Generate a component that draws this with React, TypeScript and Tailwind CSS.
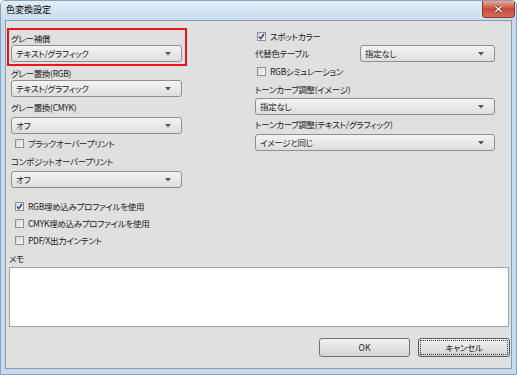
const font = { fontFamily: '"Noto Sans CJK JP", "Noto Sans", sans-serif' };

const Dropdown = ({ value, className = '' }: { value: string; className?: string }) => (
  <div
    className={`h-[17px] flex items-center justify-between pl-[4px] pr-[10px] border border-[#8e8f8f] rounded-[3px] bg-gradient-to-b from-[#f4f4f4] to-[#dedede] text-[8.5px] tracking-[-0.3px] text-[#1a1a1a] ${className}`}
  >
    <span className="leading-none">{value}</span>
    <svg width="6" height="4" viewBox="0 0 6 4">
      <path d="M0 0H6L3 3.5Z" fill="#555" />
    </svg>
  </div>
);

const Check = ({ checked = false, label }: { checked?: boolean; label: string }) => (
  <div className="flex items-center gap-[4px] text-[8.5px] tracking-[-0.3px] text-[#1a1a1a]">
    <div className="w-[9px] h-[9px] border border-[#8f8f8f] bg-gradient-to-br from-[#d8d8d8] to-[#f7f7f7] flex items-center justify-center">
      {checked && (
        <svg width="7" height="7" viewBox="0 0 7 7">
          <path d="M1 3.6L2.8 5.6L6 1" stroke="#1d3f8f" strokeWidth="1.4" fill="none" />
        </svg>
      )}
    </div>
    <span className="leading-none">{label}</span>
  </div>
);

const Label = ({ text, className = '' }: { text: string; className?: string }) => (
  <div className={`flex items-center text-[8.5px] tracking-[-0.3px] text-[#1a1a1a] leading-none ${className}`}>{text}</div>
);

export default function App() {
  return (
    <div
      className="w-[517px] h-[375px] flex flex-col bg-[#c5d9ef] border border-[#8aa1bb] rounded-t-[5px] overflow-hidden [font-feature-settings:'palt']"
      style={font}
    >
      {/* タイトルバー */}
      <div className="h-[18px] flex items-start justify-between bg-gradient-to-b from-[#e3edf8] to-[#c9dcf0]">
        <div className="pl-[5px] pt-[4px] text-[9px] text-black leading-none">色変換設定</div>
        <div className="mr-[1px] w-[33px] h-[17px] rounded-b-[4px] border border-t-0 border-[#8a3a33] bg-gradient-to-b from-[#e8a898] via-[#c9493c] to-[#d46a5c] flex items-center justify-center">
          <svg width="9" height="8" viewBox="0 0 9 8">
            <path d="M1 1L8 7M8 1L1 7" stroke="#5a1e18" strokeWidth="2.6" />
            <path d="M1 1L8 7M8 1L1 7" stroke="#fff" strokeWidth="1.6" />
          </svg>
        </div>
      </div>

      {/* クライアント領域 */}
      <div className="flex-1 mx-[4px] mb-[5px] mt-[1px] border border-[#8f9aa6] bg-[#e0e0e0] flex flex-col">
        <div className="flex pt-[7px] pl-[1px]">
          {/* 左列 */}
          <div className="w-[180px] flex flex-col">
            <div className="border-2 border-[#e8141b] pl-[2px] pr-[3px] pt-[1px] pb-[2px]">
              <Label text="グレー補償" className="h-[14px]" />
              <Dropdown value="テキスト/グラフィック" />
            </div>
            <div className="pl-[4px] pr-[5px] flex flex-col">
              <Label text="グレー置換(RGB)" className="h-[14px]" />
              <Dropdown value="テキスト/グラフィック" />
              <Label text="グレー置換(CMYK)" className="h-[20px]" />
              <Dropdown value="オフ" />
              <div className="h-[18px] flex items-center pl-[4px]">
                <Check label="ブラックオーバープリント" />
              </div>
              <Label text="コンポジットオーバープリント" className="h-[19px]" />
              <Dropdown value="オフ" />
              <div className="mt-[10px] flex flex-col pl-[4px]">
                <div className="h-[17px] flex items-center">
                  <Check checked label="RGB埋め込みプロファイルを使用" />
                </div>
                <div className="h-[17px] flex items-center">
                  <Check label="CMYK埋め込みプロファイルを使用" />
                </div>
                <div className="h-[17px] flex items-center">
                  <Check label="PDF/X出力インテント" />
                </div>
              </div>
            </div>
          </div>

          {/* 右列 */}
          <div className="ml-[68px] w-[240px] flex flex-col">
            <div className="h-[16px] flex items-center pl-[2px]">
              <Check checked label="スポットカラー" />
            </div>
            <div className="mt-[1px] h-[17px] flex items-center justify-between">
              <Label text="代替色テーブル" />
              <Dropdown value="指定なし" className="w-[135px]" />
            </div>
            <div className="h-[19px] flex items-center pl-[2px]">
              <Check label="RGBシミュレーション" />
            </div>
            <Label text="トーンカーブ調整(イメージ)" className="h-[16px]" />
            <Dropdown value="指定なし" className="mt-[1px]" />
            <Label text="トーンカーブ調整(テキスト/グラフィック)" className="h-[19px]" />
            <Dropdown value="イメージと同じ" />
          </div>
        </div>

        {/* メモ */}
        <Label text="メモ" className="h-[18px] pl-[3px]" />
        <div className="ml-[3px] mr-[2px] h-[60px] bg-white border border-[#a3a3a3]" />

        {/* ボタン */}
        <div className="mt-[11px] flex justify-end gap-[8px] pr-[1px]">
          <div className="w-[91px] h-[19px] flex items-center justify-center border border-[#707070] rounded-[3px] bg-gradient-to-b from-[#f2f2f2] to-[#d4d4d4] text-[8.5px] text-[#1a1a1a] leading-none">
            OK
          </div>
          <div className="w-[92px] h-[19px] p-[1px] border border-[#5a5a5a] rounded-[3px] bg-gradient-to-b from-[#f2f2f2] to-[#d4d4d4]">
            <div className="w-full h-full flex items-center justify-center border border-dotted border-[#333] text-[8.5px] tracking-[-0.3px] text-[#1a1a1a] leading-none">
              キャンセル
            </div>
          </div>
        </div>
      </div>
    </div>
  );
}
